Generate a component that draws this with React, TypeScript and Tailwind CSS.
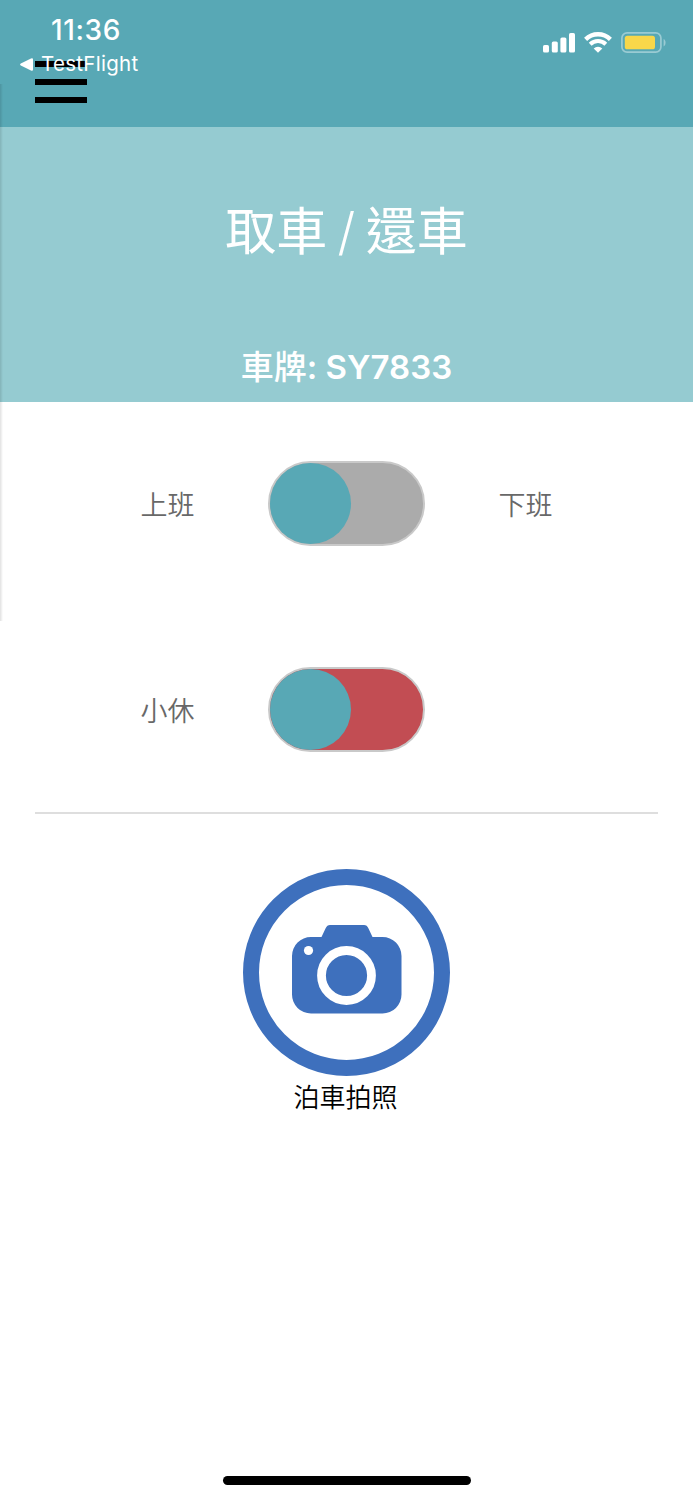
import clsx from "clsx";

interface ToggleRowProps {
  left: string;
  right?: string;
  color: "gray" | "red";
}

function SignalIcon() {
  return (
    <svg width="32" height="20" viewBox="0 0 32 20" fill="#fff">
      <rect x="0" y="12" width="6" height="7.6" rx="1.6" />
      <rect x="8.8" y="8.4" width="6" height="11.2" rx="1.6" />
      <rect x="17.4" y="4.4" width="6" height="15.2" rx="1.6" />
      <rect x="26" y="0" width="6" height="19.6" rx="1.6" />
    </svg>
  );
}

function WifiIcon() {
  return (
    <svg width="28" height="21" viewBox="0 0 28 21" fill="none">
      <path d="M1.6 7.3a17.8 17.8 0 0 1 24.8 0" stroke="#fff" strokeWidth="4.4" />
      <path d="M6.2 12.200a11.200 11.200 0 0 1 15.600 0" stroke="#fff" strokeWidth="4" />
      <path d="M14 20.700l-4.300-4.300a6.200 6.200 0 0 1 8.600 0L14 20.700Z" fill="#fff" />
    </svg>
  );
}

function BatteryIcon() {
  return (
    <svg width="46" height="21" viewBox="0 0 46 21" fill="none">
      <rect x="0.9" y="0.9" width="39" height="19.2" rx="5.2" stroke="#9acbd3" strokeWidth="1.7" />
      <rect x="3.8" y="3.7" width="30.2" height="13.6" rx="2.6" fill="#f8d74a" />
      <path d="M42.6 7v7.4c2.6-1.2 2.6-6.2 0-7.4Z" fill="#9acbd3" />
    </svg>
  );
}

function CameraIcon() {
  return (
    <svg width="208" height="208" viewBox="0 0 208 208" fill="none">
      <circle cx="103.500" cy="104.500" r="95.5" stroke="#3e70bd" strokeWidth="16" />
      <path
        d="M68 69h10.500l4-8.600q1.600-3.400 4.500-3.400h34q3 0 4.500 3.400l4 8.600H139.500a19 19 0 0 1 19 19v38.500a19 19 0 0 1-19 19H68a19 19 0 0 1-19-19V88a19 19 0 0 1 19-19Z"
        fill="#3e70bd"
      />
      <circle cx="65.500" cy="82.500" r="4.600" fill="#fff" />
      <circle cx="103.500" cy="107.500" r="25" stroke="#fff" strokeWidth="8.800" />
    </svg>
  );
}

function ToggleRow({ left, right, color }: ToggleRowProps) {
  return (
    <div className="grid h-[85px] grid-cols-3 items-center justify-items-center text-[27px] font-[350] text-[#686868]">
      <span className="pt-1.5">{left}</span>
      <button
        type="button"
        className={clsx(
          "flex h-[85px] w-[157px] items-center rounded-full border-2 border-[#c9c9c9]",
          color === "gray" ? "bg-[#ababab]" : "bg-[#c24d53]"
        )}
      >
        <span className="size-[81px] rounded-full bg-[#58a8b5]" />
      </button>
      <span className="pt-1.5">{right}</span>
    </div>
  );
}

export default function App() {
  return (
    <div className="relative flex h-[1500px] w-[693px] flex-col overflow-hidden bg-white font-['Inter','Noto_Sans_CJK_TC',sans-serif]">
      <header className="relative h-[127px] shrink-0 bg-[#58a8b5] text-white">
        <div className="flex flex-col gap-3 pt-[61px] pl-[35px]">
          <span className="h-1.5 w-[52px] bg-black" />
          <span className="h-1.5 w-[52px] bg-black" />
          <span className="h-1.5 w-[52px] bg-black" />
        </div>

        {/* iOS status bar sits over the app header */}
        <div className="absolute inset-x-0 top-0 flex justify-between">
          <div className="pt-3.5 pl-5">
            <div className="pl-[31px] text-[28px] leading-8 font-medium tracking-[0.6px]">11:36</div>
            <div className="flex items-center gap-2 pt-1 text-[20.5px] leading-7 tracking-[0.3px]">
              <svg width="13" height="13" viewBox="0 0 13 13" fill="#fff">
                <path d="M.8 5.600 11 .4q2-.8 2 1.100v10q0 1.900-2 1.100L.8 7.400q-1.400-.9 0-1.800Z" />
              </svg>
              <span>TestFlight</span>
            </div>
          </div>
          <div className="flex items-start pt-8 pr-[26px]">
            <div className="pt-px"><SignalIcon /></div>
            <div className="pl-[9px]"><WifiIcon /></div>
            <div className="pl-[9px]"><BatteryIcon /></div>
          </div>
        </div>
      </header>

      <section className="flex h-[275px] shrink-0 flex-col items-center bg-[#95cbd1] text-white">
        <h1 className="pt-[69px] text-[51px] leading-[72px] [word-spacing:-4px] whitespace-pre">
          取車<span className="font-light"> / </span>還車
        </h1>
        <p className="pt-[75px] text-[33px] leading-[48px] font-semibold">
          <span className="font-medium">車牌</span>: SY7833
        </p>
      </section>

      <main className="flex flex-col px-[35px]">
        <div className="flex flex-col gap-[121px] px-[43px] pt-[59px]">
          <ToggleRow left="上班" right="下班" color="gray" />
          <ToggleRow left="小休" color="red" />
        </div>
        <hr className="mt-[60px] border-t-2 border-[#dedede]" />
        <button type="button" className="mt-[54px] flex flex-col items-center self-center text-black">
          <CameraIcon />
          <span className="pt-0.5 pr-0.5 text-[26px] leading-10 font-[350]">泊車拍照</span>
        </button>
      </main>

      <div className="mt-auto mb-[15px] h-[9px] w-[248px] self-center rounded-full bg-black" />

      {/* shadow of the closed side drawer */}
      <div className="absolute top-[84px] left-0 h-[537px] w-[3px] bg-linear-to-r from-black/12 to-transparent" />
    </div>
  );
}
